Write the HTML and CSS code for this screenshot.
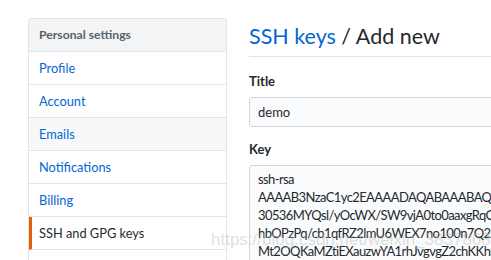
FILE: index.html
```html
<!DOCTYPE html>
<html>
<head>
<meta charset="utf-8">
<link rel="stylesheet" href="styles.css">
</head>
<body>
<div class="page">
  <nav class="menu">
    <div class="menu-head">Personal settings</div>
    <a class="menu-item">Profile</a>
    <a class="menu-item">Account</a>
    <a class="menu-item hover">Emails</a>
    <a class="menu-item">Notifications</a>
    <a class="menu-item">Billing</a>
    <a class="menu-item selected">SSH and GPG keys</a>
    <a class="menu-item">Security</a>
  </nav>
  <main class="main">
    <h1 class="title"><span class="crumb">SSH keys</span> / Add new</h1>
    <div class="field">
      <label class="label">Title</label>
      <div class="input">demo</div>
    </div>
    <div class="field">
      <label class="label">Key</label>
      <div class="textarea">ssh-rsa
AAAAB3NzaC1yc2EAAAADAQABAAABAQDxk2Lq9bT
30536MYQsl/yOcWX/SW9vjA0to0aaxgRqCv8Hm1z
hbOPzPq/cb1qfRZ2lmU6WEX7no100n7Q2rPfY0aJ
Mt2OQKaMZtiEXauzwYA1rhJvgvgZ2chKKhS7uWd4
x</div>
    </div>
  </main>
</div>
<div class="watermark">https://blog.csdn.net/weixin_38378684</div>
</body>
</html>
```

FILE: styles.css
```css
html, body {
  margin: 0;
  padding: 0;
  background: #fff;
  overflow: hidden;
}
body {
  width: 491px;
  height: 260px;
  font-family: Lato, "Noto Sans", sans-serif;
  color: #24292e;
  position: relative;
}
.page {
  display: flex;
  gap: 22px;
  padding: 18px 0 0 28px;
  width: 800px;
}
.menu {
  width: 197px;
  flex: none;
  border: 1px solid #e1e4e8;
  border-radius: 3px;
  display: flex;
  flex-direction: column;
}
.menu-head {
  height: 32px;
  line-height: 32px;
  padding-left: 10px;
  background: #f3f4f6;
  color: #586069;
  font-size: 12.2px;
  font-weight: 700;
  border-bottom: 1px solid #e1e4e8;
}
.menu-item {
  height: 32px;
  line-height: 32px;
  padding-left: 10px;
  font-size: 12.8px;
  color: #0366d6;
  border-bottom: 1px solid #e1e4e8;
}
.menu-item.hover {
  background: #f6f8fa;
}
.menu-item.selected {
  color: #24292e;
  border-left: 3px solid #e36209;
  padding-left: 7px;
}
.main {
  width: 500px;
  flex: none;
}
.title {
  margin: 0;
  font-size: 21.5px;
  font-weight: 400;
  line-height: 36px;
  padding-bottom: 2px;
  border-bottom: 1px solid #e1e4e8;
}
.crumb {
  color: #0366d6;
}
.field {
  display: flex;
  flex-direction: column;
}
.label {
  font-size: 13px;
  font-weight: 700;
  line-height: 20px;
  margin-top: 14px;
  margin-bottom: 6px;
}
.field + .field .label {
  margin-top: 12px;
}
.input {
  height: 28px;
  line-height: 28px;
  padding: 0 8px;
  font-size: 13px;
  background: #fafbfc;
  border: 1px solid #d1d5da;
  border-radius: 3px;
}
.textarea {
  height: 200px;
  padding: 4px 8px;
  font-size: 13px;
  line-height: 18px;
  letter-spacing: -0.6px;
  white-space: pre;
  overflow: hidden;
  background: #fafbfc;
  border: 1px solid #d1d5da;
  border-radius: 3px;
}
.watermark {
  position: absolute;
  left: 211px;
  top: 230px;
  font-family: "Liberation Sans", sans-serif;
  font-size: 17px;
  color: rgba(185, 185, 185, 0.45);
  white-space: nowrap;
  pointer-events: none;
}
```
